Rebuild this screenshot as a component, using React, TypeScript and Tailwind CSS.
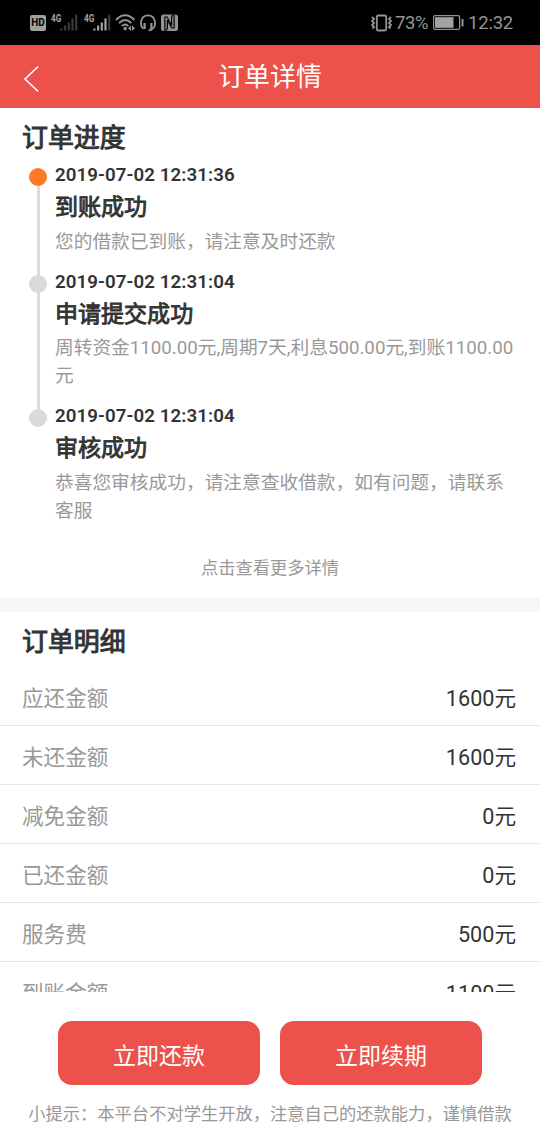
import React from "react";

interface ProgressItem {
	time: string;
	title: string;
	desc: string;
}

const progress: ProgressItem[] = [
	{
		time: "2019-07-02 12:31:36",
		title: "到账成功",
		desc: "您的借款已到账，请注意及时还款",
	},
	{
		time: "2019-07-02 12:31:04",
		title: "申请提交成功",
		desc: "周转资金1100.00元,周期7天,利息500.00元,到账1100.00元",
	},
	{
		time: "2019-07-02 12:31:04",
		title: "审核成功",
		desc: "恭喜您审核成功，请注意查收借款，如有问题，请联系客服",
	},
];

const details = [
	{ label: "应还金额", value: "1600元" },
	{ label: "未还金额", value: "1600元" },
	{ label: "减免金额", value: "0元" },
	{ label: "已还金额", value: "0元" },
	{ label: "服务费", value: "500元" },
	{ label: "到账金额", value: "1100元" },
];

function Signal({ level }: { level: number }) {
	const heights = [2, 5, 8, 12, 16];
	return (
		<>
			<span className="w-[9px] origin-left scale-x-75 text-[11px] leading-[9px] font-bold text-[#a3a3a3]">4G</span>
			<svg width="18" height="17" viewBox="0 0 18 17">
				{heights.map((h, i) => (
					<rect
						key={h}
						x={0.3 + i * 3.7}
						y={16.5 - h}
						width="2.2"
						height={h}
						fill={i < level ? "#a3a3a3" : "#3a3a3a"}
					/>
				))}
			</svg>
		</>
	);
}

function StatusBar() {
	return (
		<div className="flex h-[45px] shrink-0 items-start justify-between bg-black pr-[27px] pl-[30px] text-[#949494]">
			<div className="flex items-start pt-[14px]">
				<span className="mt-px mr-[5px] flex h-[16px] w-4 items-center justify-center rounded-[2px] bg-[#a0a0a0] text-[10px] leading-none font-bold text-black">
					HD
				</span>
				<Signal level={0} />
				<span className="w-[6px]" />
				<Signal level={4} />
				{/* wifi with traffic arrows */}
				<svg className="ml-[4px]" width="21" height="18" viewBox="0 0 21 18" fill="none" stroke="#949494" strokeWidth="1.9">
					<path d="M1 6 Q10 -3.4 19.4 6" />
					<path d="M4 9.2 Q10.2 3 16.4 9.2" />
					<path d="M6.8 12.2 Q10.2 8.8 13.4 12.2" />
					<circle cx="10.2" cy="14.6" r="1.8" fill="#949494" stroke="none" />
					<path d="M16 11.5 L13 14.3 L16 17Z M17 11.5 L20 14.3 L17 17Z" fill="#949494" stroke="none" />
				</svg>
				{/* headset */}
				<svg className="ml-[4px]" width="16" height="18" viewBox="0 0 16 18" fill="none" stroke="#949494" strokeWidth="1.8">
					<path d="M3.5 14.8 C-0.8 11.6 0.2 1.3 8 1.3 S16.8 11.6 12.5 14.8 Q11.5 16.3 8.5 16.3" />
					<path d="M4.6 9 V15 M11.4 9 V15" strokeWidth="2.2" />
				</svg>
				{/* nfc */}
				<svg className="ml-[5px]" width="17" height="17" viewBox="0 0 17 17">
					<rect y="0.5" width="17" height="16.5" rx="2.5" fill="#949494" />
					<path d="M3.9 17 V3 L6.2 3 L10.6 11.5 V3.8 Q10.6 2 12 0.5" fill="none" stroke="#000" strokeWidth="1.2" />
					<path d="M13.1 0.5 V14 L10.8 14 L6.4 6 V13.2 Q6.4 15 5 17" fill="none" stroke="#000" strokeWidth="1.2" />
				</svg>
			</div>
			<div className="flex h-[45px] items-center text-[18.5px] leading-none">
				<svg width="21" height="18" viewBox="0 0 21 18" fill="none" stroke="#949494" strokeWidth="1.8">
					<rect x="5.8" y="1.5" width="9.4" height="15" rx="1.5" />
					<path d="M1 3 L3 5 L1 7 L3 9 L1 11 L3 13 L1.5 14.5" />
					<path d="M20 3 L18 5 L20 7 L18 9 L20 11 L18 13 L19.5 14.5" />
				</svg>
				<span className="ml-[3px] w-[34px] pt-[2px] tracking-[-0.4px]">73%</span>
				<svg className="ml-[4px]" width="31" height="15" viewBox="0 0 31 15">
					<rect x="0.6" y="0.6" width="26" height="13.8" rx="1.5" fill="none" stroke="#949494" strokeWidth="1.2" />
					<rect x="2" y="2.2" width="18.5" height="10.6" fill="#a3a3a3" />
					<rect x="28.5" y="4" width="2" height="7.5" fill="#949494" />
				</svg>
				<span className="mr-px ml-[4px] w-[44px] pt-[2px] text-right tracking-[-0.2px]">12:32</span>
			</div>
		</div>
	);
}

function SectionTitle({ children }: { children: React.ReactNode }) {
	return (
		<h2 className="pl-[22px] text-[25.92px] leading-[39px] text-[#333] [-webkit-text-stroke:1px_#333]">
			{children}
		</h2>
	);
}

function ProgressRow({ item, active, last }: { item: ProgressItem; active: boolean; last: boolean }) {
	return (
		<li className="flex">
			<div className="relative flex w-[18px] shrink-0 justify-center">
				{!last && <div className="absolute top-[17px] bottom-[-17px] w-[3px] bg-[#dcdcdc]" />}
				<div
					className={
						active
							? "relative mt-[7px] size-[18px] rounded-full bg-[#ff7a26]"
							: "relative z-10 mt-[7px] size-[18px] rounded-full bg-[#dadada]"
					}
				/>
			</div>
			<div className="ml-2 flex-1 pb-3">
				<p className="text-[18.72px] leading-7 font-semibold tracking-[0.08px] text-[#333]">{item.time}</p>
				<h3 className="pt-px text-[23.04px] leading-[35px] text-[#333] [-webkit-text-stroke:0.9px_#333]">
					{item.title}
				</h3>
				<p className="mt-[2.6px] text-[18.72px] leading-7 break-all text-[#999]">{item.desc}</p>
			</div>
		</li>
	);
}

export default function App() {
	return (
		<div className="flex h-[1140px] w-[540px] flex-col overflow-hidden bg-white font-[Roboto,'Noto_Sans_CJK_SC',sans-serif]">
			<StatusBar />

			<header className="grid h-[63px] shrink-0 grid-cols-[60px_1fr_60px] items-center bg-[#ec524b] text-white">
				<svg className="mt-1 ml-[23px]" width="17" height="28" viewBox="0 0 17 28" fill="none" stroke="currentColor" strokeWidth="1.6">
					<path d="M15.2 1.5 L2 14 L15.2 26.5" />
				</svg>
				<h1 className="pt-px text-center text-[25.92px] leading-[39px]">订单详情</h1>
			</header>

			<main className="flex h-[884px] shrink-0 flex-col overflow-hidden">
				<section className="h-[490px] shrink-0 pt-[11px]">
					<SectionTitle>订单进度</SectionTitle>
					<ul className="mt-[3px] pr-[26px] pl-[29px]">
						{progress.map((item, i) => (
							<ProgressRow
								key={item.title}
								item={item}
								active={i === 0}
								last={i === progress.length - 1}
							/>
						))}
					</ul>
					<p className="mt-[18px] text-center text-[17.28px] leading-[26px] text-[#999]">点击查看更多详情</p>
				</section>

				<div className="h-[14px] shrink-0 bg-[#f6f6f6]" />

				<section className="shrink-0 pt-[11px]">
					<SectionTitle>订单明细</SectionTitle>
					<div className="mt-[5px]">
						{details.map((row) => (
							<div
								key={row.label}
								className="flex h-[59px] items-center justify-between border-b border-[#e8e8e8] pt-[6px] pr-6 pl-[22px] text-[21.6px]"
							>
								<span className="text-[#999]">{row.label}</span>
								<span className="text-[#333]">{row.value}</span>
							</div>
						))}
					</div>
				</section>
			</main>

			<footer className="flex flex-1 flex-col items-center bg-white pt-[29px]">
				<div className="flex gap-5 text-[23.04px] text-white">
					<button className="h-16 w-[202px] rounded-[14px] bg-[#ec524b] pt-[9px]">立即还款</button>
					<button className="h-16 w-[202px] rounded-[14px] bg-[#ec524b] pt-[9px]">立即续期</button>
				</div>
				<p className="mt-4 text-[17.28px] leading-[26px] whitespace-nowrap text-[#999]">
					小提示：本平台不对学生开放，注意自己的还款能力，谨慎借款
				</p>
			</footer>
		</div>
	);
}
